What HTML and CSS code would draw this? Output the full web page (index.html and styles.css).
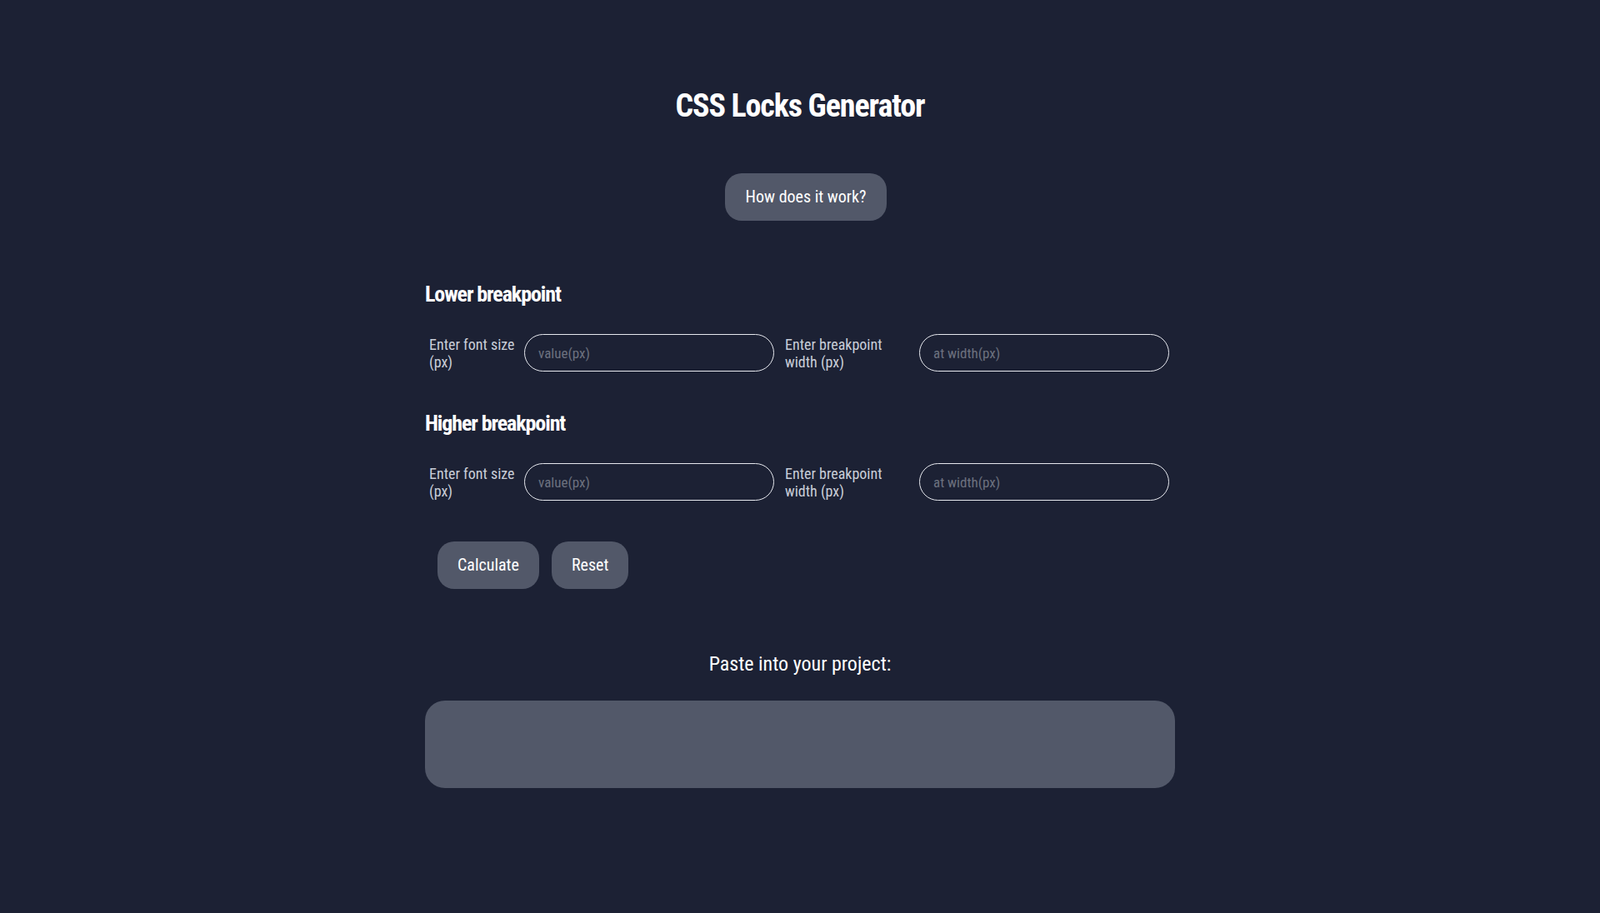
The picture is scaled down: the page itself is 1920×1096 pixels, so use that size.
FILE: index.html
```html
<!DOCTYPE html>
<html lang="en">
<head>
<meta charset="utf-8">
<title>CSS Locks Generator</title>
<link rel="stylesheet" href="styles.css">
</head>
<body>
<main class="page">
  <h1 class="title">CSS Locks Generator</h1>
  <div class="how-wrap"><button class="btn btn-how" type="button">How does it work?</button></div>

  <section class="group group-lower">
    <h2 class="group-title">Lower breakpoint</h2>
    <div class="row">
      <label class="label label-font" for="lf">Enter font size (px)</label>
      <input class="field" id="lf" type="text" placeholder="value(px)">
      <label class="label label-bp" for="lw">Enter breakpoint width (px)</label>
      <input class="field" id="lw" type="text" placeholder="at width(px)">
    </div>
  </section>

  <section class="group group-higher">
    <h2 class="group-title">Higher breakpoint</h2>
    <div class="row">
      <label class="label label-font" for="hf">Enter font size (px)</label>
      <input class="field" id="hf" type="text" placeholder="value(px)">
      <label class="label label-bp" for="hw">Enter breakpoint width (px)</label>
      <input class="field" id="hw" type="text" placeholder="at width(px)">
    </div>
  </section>

  <div class="actions">
    <button class="btn" type="button">Calculate</button>
    <button class="btn" type="button">Reset</button>
  </div>

  <p class="paste">Paste into your project:</p>
  <div class="output"></div>
</main>
</body>
</html>
```

FILE: styles.css
```css
* { box-sizing: border-box; }
html, body { margin: 0; padding: 0; }
body {
  background: #1c2134;
  color: #ffffff;
  font-family: "Roboto Condensed", Roboto, "Liberation Sans", sans-serif;
  font-stretch: 75%;
  min-height: 1096px;
}
.page {
  width: 900px;
  margin: 0 auto;
  padding-top: 105px;
}
.title {
  margin: 0;
  text-align: center;
  font-size: 38px;
  line-height: 44px;
  font-weight: 700;
  letter-spacing: -1.1px;
}
.how-wrap {
  display: flex;
  justify-content: center;
  margin-top: 59px;
  padding-left: 14px;
}
.btn {
  font-family: inherit;
  font-stretch: 75%;
  font-size: 20px;
  line-height: 23px;
  color: #ffffff;
  background: #525869;
  border: none;
  border-radius: 20px;
  padding: 17px 24px;
  cursor: pointer;
}
.btn-how { padding: 17px 25px; }
.group-title {
  margin: 0;
  font-size: 26px;
  line-height: 30px;
  font-weight: 700;
  letter-spacing: -1.1px;
}
.group-lower { margin-top: 73px; }
.group-higher { margin-top: 47px; }
.row {
  display: flex;
  align-items: center;
  margin-top: 33px;
  padding-left: 5px;
}
.label {
  font-size: 18px;
  line-height: 21px;
  color: #c9ced8;
}
.label-font { width: 104px; margin-right: 10px; }
.label-bp { width: 140px; margin-left: 13px; margin-right: 21px; }
.field {
  width: 300px;
  height: 45px;
  border: 1px solid #e6e8ee;
  border-radius: 23px;
  background: transparent;
  color: #ffffff;
  font-family: inherit;
  font-stretch: 75%;
  font-size: 17px;
  padding: 0 16px;
  outline: none;
}
.field::placeholder { color: #6c717f; }
.actions {
  display: flex;
  gap: 15px;
  margin-top: 49px;
  padding-left: 15px;
}
.paste {
  margin: 0;
  margin-top: 76px;
  text-align: center;
  font-size: 24px;
  line-height: 28px;
}
.output {
  margin-top: 30px;
  height: 105px;
  background: #525869;
  border-radius: 24px;
}
```
